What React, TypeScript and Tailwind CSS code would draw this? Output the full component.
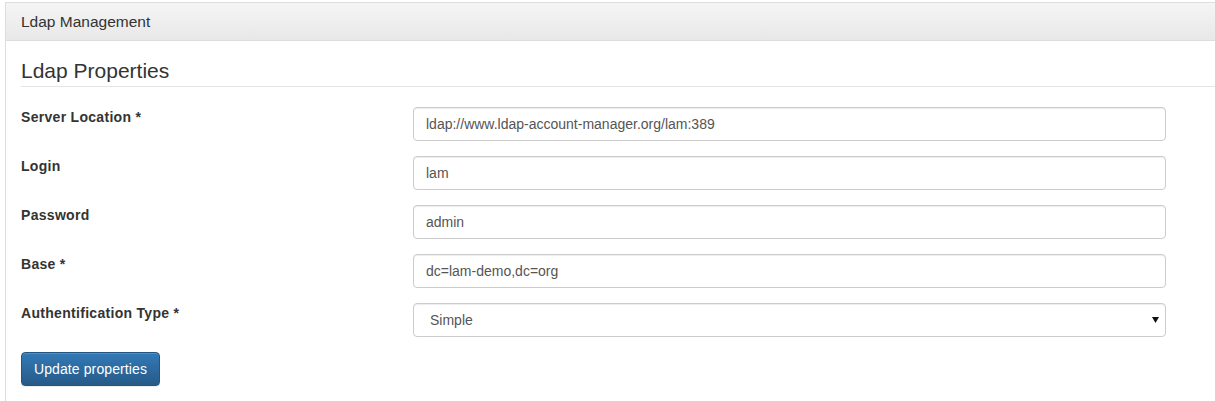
const fields = [
  { label: "Server Location *", value: "ldap://www.ldap-account-manager.org/lam:389" },
  { label: "Login", value: "lam" },
  { label: "Password", value: "admin" },
  { label: "Base *", value: "dc=lam-demo,dc=org" },
];

const inputCls =
  "h-[34px] w-[753px] rounded-[4px] border border-[#ccc] bg-white px-[12px] text-[14px] text-[#555] shadow-[inset_0_1px_1px_rgba(0,0,0,0.075)] outline-none";

export default function App() {
  return (
    <div className="h-[401px] w-full overflow-hidden bg-white font-['Liberation_Sans',Arial,sans-serif] text-[14px] text-[#333]">
      <div className="ml-[5px] mt-[2px] w-[1240px] border-l border-t border-[#ddd]">
        <div className="flex h-[38px] items-center border-b border-[#ddd] bg-gradient-to-b from-[#f5f5f5] to-[#e8e8e8] px-[15px] text-[15.5px]">
          Ldap Management
        </div>
        <div className="px-[15px] pb-[15px] pt-[15px]">
          <div className="mb-[20px] border-b border-[#e5e5e5] text-[21px] leading-[30px]">Ldap Properties</div>
          {fields.map((f) => (
            <div key={f.label} className="mb-[15px] flex">
              <label className="w-[392px] font-bold leading-[20px] tracking-[0.3px]">{f.label}</label>
              <input className={inputCls} defaultValue={f.value} readOnly />
            </div>
          ))}
          <div className="mb-[15px] flex">
            <label className="w-[392px] font-bold leading-[20px] tracking-[0.3px]">Authentification Type *</label>
            <div className="relative">
              <select className={`${inputCls} appearance-none pl-[16px]`} defaultValue="Simple">
                <option>Simple</option>
              </select>
              <svg className="pointer-events-none absolute right-[7px] top-[14px]" width="7" height="6" viewBox="0 0 7 6">
                <path d="M0 0h7L3.5 6z" fill="#111" />
              </svg>
            </div>
          </div>
          <button className="h-[34px] rounded-[4px] border border-[#245580] bg-gradient-to-b from-[#337ab7] to-[#265a88] px-[12px] text-[14px] tracking-[0.1px] text-white shadow-[inset_0_1px_0_rgba(255,255,255,0.15),0_1px_1px_rgba(0,0,0,0.075)]">
            Update properties
          </button>
        </div>
      </div>
    </div>
  );
}
